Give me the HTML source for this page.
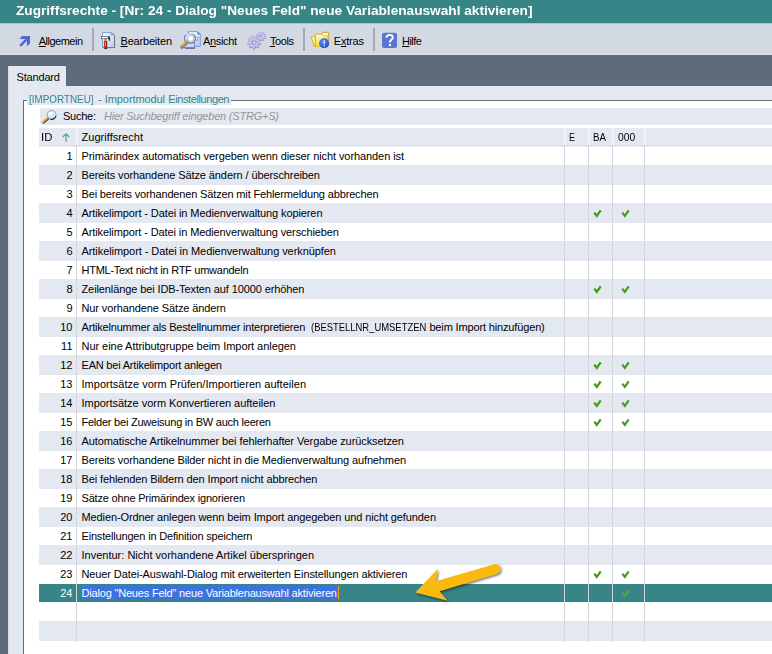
<!DOCTYPE html><html lang="de"><head><meta charset="utf-8"><title>Zugriffsrechte</title><style>

html,body{margin:0;padding:0;}
body{width:772px;height:654px;overflow:hidden;position:relative;background:#5f6b7c;font-family:"Liberation Sans", sans-serif;font-size:11px;color:#000;}
.a{position:absolute;}
.t{position:absolute;white-space:nowrap;line-height:13px;height:13px;}
.t u{text-decoration:underline;}
.row{position:absolute;left:39px;width:733px;height:19px;}
.alt{background:#e4e8f1;height:20px;}
.num{position:absolute;right:699.5px;top:4px;line-height:13px;white-space:nowrap;}
.vs{position:absolute;width:1px;background:#d3d6dd;top:146px;height:496px;}

</style></head><body>
<div class="a" style="left:0;top:0;width:772px;height:23px;background:#378587"></div>
<div class="a" style="left:0;top:23px;width:772px;height:32px;background:#d3d9e3"></div>
<div class="a" style="left:0;top:23px;width:772px;height:1px;background:#b3bcdc"></div>
<div class="a" style="left:0;top:54px;width:772px;height:1px;background:#dde2ea"></div>
<div class="a" style="left:8px;top:66px;width:58px;height:21px;border-radius:1px 1px 0 0;background:#e4e8f0"></div>
<div class="a" style="left:8px;top:86px;width:764px;height:568px;background:#e4e8f0"></div>
<div class="a" style="left:8px;top:67px;width:1px;height:587px;background:#d9dde6"></div>
<div class="a" style="left:23px;top:100px;width:760px;height:570px;border:1px solid #6a6a6a;box-shadow:inset 1px 1px 0 #fff;background:#fff"></div>
<div class="a" style="left:27px;top:93px;width:204px;height:12px;background:#e4e8f0"></div>
<div class="a" style="left:40px;top:108px;width:732px;height:17px;background:#e4e8f0"></div>
<div class="a" style="left:39px;top:128px;width:733px;height:18px;background:#e4e8f1"></div>
<div class="a" style="left:76px;top:128px;width:2px;height:17px;background:#f3f5f9"></div>
<div class="a" style="left:564px;top:128px;width:2px;height:17px;background:#f3f5f9"></div>
<div class="a" style="left:588px;top:128px;width:2px;height:17px;background:#f3f5f9"></div>
<div class="a" style="left:612px;top:128px;width:2px;height:17px;background:#f3f5f9"></div>
<div class="a" style="left:644px;top:128px;width:2px;height:17px;background:#f3f5f9"></div>
<div class="row" style="top:146px;"><span class="num">1</span></div>
<div class="row alt" style="top:165px;"><span class="num">2</span></div>
<div class="row" style="top:184px;"><span class="num">3</span></div>
<div class="row alt" style="top:203px;"><span class="num">4</span></div>
<div class="row" style="top:222px;"><span class="num">5</span></div>
<div class="row alt" style="top:241px;"><span class="num">6</span></div>
<div class="row" style="top:260px;"><span class="num">7</span></div>
<div class="row alt" style="top:279px;"><span class="num">8</span></div>
<div class="row" style="top:298px;"><span class="num">9</span></div>
<div class="row alt" style="top:317px;"><span class="num">10</span></div>
<div class="row" style="top:336px;"><span class="num">11</span></div>
<div class="row alt" style="top:355px;"><span class="num">12</span></div>
<div class="row" style="top:374px;"><span class="num">13</span></div>
<div class="row alt" style="top:393px;"><span class="num">14</span></div>
<div class="row" style="top:412px;"><span class="num">15</span></div>
<div class="row alt" style="top:431px;"><span class="num">16</span></div>
<div class="row" style="top:450px;"><span class="num">17</span></div>
<div class="row alt" style="top:469px;"><span class="num">18</span></div>
<div class="row" style="top:488px;"><span class="num">19</span></div>
<div class="row alt" style="top:507px;"><span class="num">20</span></div>
<div class="row" style="top:526px;"><span class="num">21</span></div>
<div class="row alt" style="top:545px;"><span class="num">22</span></div>
<div class="row" style="top:564px;"><span class="num">23</span></div>
<div class="row alt" style="top:584px;height:18px;background:#378587;color:#fff;"><span class="num" style="top:3px">24</span></div>
<div class="row alt" style="top:621px"></div>
<div class="a" style="left:39px;top:145px;width:733px;height:1px;background:#d4d9e3"></div>
<div class="a" style="left:39px;top:146px;width:733px;height:1px;background:#eceff5"></div>
<div class="vs" style="left:76px"></div>
<div class="vs" style="left:564px"></div>
<div class="vs" style="left:588px"></div>
<div class="vs" style="left:612px"></div>
<div class="vs" style="left:644px"></div>
<div class="a" style="left:82px;top:586px;width:256px;height:13px;background:#3c72dd"></div>
<div class="a" style="left:338px;top:586px;width:1px;height:13px;background:#f0a020"></div>
<span class="t" id="r1" style="left:81.50px;top:150px;letter-spacing:-0.0831px;">Primärindex automatisch vergeben wenn dieser nicht vorhanden ist</span>
<span class="t" id="r2" style="left:81.50px;top:169px;letter-spacing:-0.0931px;">Bereits vorhandene Sätze ändern / überschreiben</span>
<span class="t" id="r3" style="left:81.50px;top:188px;letter-spacing:-0.1535px;">Bei bereits vorhandenen Sätzen mit Fehlermeldung abbrechen</span>
<span class="t" id="r4" style="left:81.50px;top:207px;letter-spacing:-0.0976px;">Artikelimport - Datei in Medienverwaltung kopieren</span>
<span class="t" id="r5" style="left:81.50px;top:226px;letter-spacing:-0.1040px;">Artikelimport - Datei in Medienverwaltung verschieben</span>
<span class="t" id="r6" style="left:81.50px;top:245px;letter-spacing:-0.0689px;">Artikelimport - Datei in Medienverwaltung verknüpfen</span>
<span class="t" id="r7" style="left:81.50px;top:264px;letter-spacing:-0.2661px;">HTML-Text nicht in RTF umwandeln</span>
<span class="t" id="r8" style="left:81.50px;top:283px;letter-spacing:-0.1047px;">Zeilenlänge bei IDB-Texten auf 10000 erhöhen</span>
<span class="t" id="r9" style="left:81.50px;top:302px;letter-spacing:-0.1112px;">Nur vorhandene Sätze ändern</span>
<span class="t" id="s10_0" style="left:81.50px;top:321px;letter-spacing:-0.1869px;">Artikelnummer als Bestellnummer interpretieren</span>
<span class="t" id="s10_1" style="left:310.50px;top:321px;transform-origin:0 0;transform:scaleX(0.8573);">(BESTELLNR_UMSETZEN</span>
<span class="t" id="s10_2" style="left:429.40px;top:321px;letter-spacing:-0.1466px;">beim Import hinzufügen)</span>
<span class="t" id="r11" style="left:81.50px;top:340px;letter-spacing:-0.0469px;">Nur eine Attributgruppe beim Import anlegen</span>
<span class="t" id="r12" style="left:81.50px;top:359px;letter-spacing:-0.2015px;">EAN bei Artikelimport anlegen</span>
<span class="t" id="r13" style="left:81.50px;top:378px;letter-spacing:0.0167px;">Importsätze vorm Prüfen/Importieren aufteilen</span>
<span class="t" id="r14" style="left:81.50px;top:397px;letter-spacing:-0.0275px;">Importsätze vorm Konvertieren aufteilen</span>
<span class="t" id="r15" style="left:81.50px;top:416px;letter-spacing:-0.2327px;">Felder bei Zuweisung in BW auch leeren</span>
<span class="t" id="r16" style="left:81.50px;top:435px;letter-spacing:-0.0928px;">Automatische Artikelnummer bei fehlerhafter Vergabe zurücksetzen</span>
<span class="t" id="r17" style="left:81.50px;top:454px;letter-spacing:-0.1274px;">Bereits vorhandene Bilder nicht in die Medienverwaltung aufnehmen</span>
<span class="t" id="r18" style="left:81.50px;top:473px;letter-spacing:-0.1184px;">Bei fehlenden Bildern den Import nicht abbrechen</span>
<span class="t" id="r19" style="left:81.50px;top:492px;letter-spacing:-0.1836px;">Sätze ohne Primärindex ignorieren</span>
<span class="t" id="r20" style="left:81.50px;top:511px;letter-spacing:-0.1049px;">Medien-Ordner anlegen wenn beim Import angegeben und nicht gefunden</span>
<span class="t" id="r21" style="left:81.50px;top:530px;letter-spacing:-0.1762px;">Einstellungen in Definition speichern</span>
<span class="t" id="r22" style="left:81.50px;top:549px;letter-spacing:0.0031px;">Inventur: Nicht vorhandene Artikel überspringen</span>
<span class="t" id="r23" style="left:81.50px;top:568px;letter-spacing:-0.1094px;">Neuer Datei-Auswahl-Dialog mit erweiterten Einstellungen aktivieren</span>
<span class="t" id="r24" style="left:81.50px;top:587px;letter-spacing:-0.1872px;color:#fff;">Dialog &quot;Neues Feld&quot; neue Variablenauswahl aktivieren</span>
<span class="t" id="t_title" style="left:15.50px;transform-origin:0 0;transform:scaleX(1.1372);font-weight:bold;font-size:12px;color:#fff;top:5px;">Zugriffsrechte - [Nr: 24 - Dialog "Neues Feld" neue Variablenauswahl aktivieren]</span>
<span class="t" id="t_allg" style="left:38.75px;letter-spacing:-0.5078px;top:35px;"><u>A</u>llgemein</span>
<span class="t" id="t_bearb" style="left:120.50px;letter-spacing:-0.1910px;top:35px;"><u>B</u>earbeiten</span>
<span class="t" id="t_ans" style="left:203.00px;letter-spacing:-0.3490px;top:35px;">A<u>n</u>sicht</span>
<span class="t" id="t_tools" style="left:270.00px;letter-spacing:-0.4219px;top:35px;"><u>T</u>ools</span>
<span class="t" id="t_extras" style="left:333.75px;letter-spacing:-0.1875px;top:35px;">E<u>x</u>tras</span>
<span class="t" id="t_hilfe" style="left:402.00px;letter-spacing:-0.5664px;top:35px;"><u>H</u>ilfe</span>
<span class="t" id="t_std" style="left:16.50px;letter-spacing:-0.1652px;top:71px;">Standard</span>
<span class="t" id="t_grp1" style="left:28.50px;transform-origin:0 0;transform:scaleX(0.8968);top:93px;color:#33858f;">[IMPORTNEU]</span>
<span class="t" id="t_grp2" style="left:98.30px;letter-spacing:-0.0966px;top:93px;color:#33858f;">- Importmodul</span>
<span class="t" id="t_grp3" style="left:168.30px;letter-spacing:-0.4052px;top:93px;color:#33858f;">Einstellungen</span>
<span class="t" id="t_suche" style="left:63.00px;letter-spacing:-0.2500px;top:110px;">Suche:</span>
<span class="t" id="t_hint" style="left:104.00px;letter-spacing:-0.2093px;top:110px;font-style:italic;color:#93959d;">Hier Suchbegriff eingeben (STRG+S)</span>
<span class="t" id="t_hid" style="left:40.70px;transform-origin:0 0;transform:scaleX(1.0273);top:131px;">ID</span>
<span class="t" id="t_hzr" style="left:81.50px;letter-spacing:0.0469px;top:131px;">Zugriffsrecht</span>
<span class="t" id="t_hE" style="left:569.40px;transform-origin:0 0;transform:scaleX(0.8170);top:131px;">E</span>
<span class="t" id="t_hBA" style="left:593.30px;transform-origin:0 0;transform:scaleX(0.8851);top:131px;">BA</span>
<span class="t" id="t_h000" style="left:617.80px;transform-origin:0 0;transform:scaleX(0.9369);top:131px;">000</span>
<div class="a" style="left:92px;top:28px;width:2px;height:23px;background:#a1a8b7"></div>
<div class="a" style="left:303px;top:28px;width:2px;height:23px;background:#a1a8b7"></div>
<div class="a" style="left:373px;top:28px;width:2px;height:23px;background:#a1a8b7"></div>
<svg class="a" style="left:0;top:0" width="772" height="654" viewBox="0 0 772 654">
<defs>
<linearGradient id="pg" x1="0" y1="0" x2="1" y2="1"><stop offset="0" stop-color="#ffffff"/><stop offset="1" stop-color="#b9c8f4"/></linearGradient>
<linearGradient id="fo" x1="0" y1="0" x2="1" y2="1"><stop offset="0" stop-color="#fffab8"/><stop offset="1" stop-color="#efce28"/></linearGradient>
<radialGradient id="bl" cx="0.4" cy="0.35" r="0.7"><stop offset="0" stop-color="#5a96f4"/><stop offset="1" stop-color="#1a46c4"/></radialGradient>
<linearGradient id="hd" x1="0" y1="0" x2="1" y2="1"><stop offset="0" stop-color="#fbe060"/><stop offset="0.5" stop-color="#f0a020"/><stop offset="1" stop-color="#9a8a70"/></linearGradient>
<filter id="sh" x="-20%" y="-20%" width="140%" height="150%"><feDropShadow dx="1.2" dy="1.5" stdDeviation="1" flood-color="#000" flood-opacity="0.55"/></filter>
</defs>
<path d="M22.1,36 H30 V43.5 L27.3,46.1 H27 V40.8 L21.6,46.2 H20.2 L19.8,45.8 V44.4 L25.3,38.9 H19.9 V38.5 Z" fill="#4f67d2"/>
<path d="M102.5,32.6 H111.5 L114.5,35.6 V47.5 H102.5 Z" fill="url(#pg)" stroke="#7b9aea" stroke-width="1"/>
<path d="M103,47.6 H114.6 V35.6 L111.6,32.6" fill="none" stroke="#74747c" stroke-width="1"/>
<path d="M110.6,32.8 L113.2,35.4 H110.6 Z" fill="#5a9af0"/>
<rect x="101.3" y="36.4" width="7.8" height="2.3" fill="#fafafa" stroke="#505050" stroke-width="0.65"/>
<path d="M108.4,36.2 Q110.6,36.8 110.1,40.7 L108.9,40.5 Q109.2,38.9 107.9,38.6 Z" fill="#202020"/>
<rect x="104.3" y="38.9" width="2.4" height="2.3" fill="#8c8c8c"/>
<rect x="103.9" y="41.1" width="3.2" height="7.6" fill="#dc2c08"/>
<rect x="106.4" y="41.1" width="0.7" height="7.6" fill="#601408"/>
<rect x="105" y="42.3" width="0.8" height="3.8" fill="#f8b020"/>
<rect x="104.6" y="48.1" width="2.5" height="0.8" fill="#201008"/>
<linearGradient id="pg2" x1="0" y1="0" x2="0.6" y2="1"><stop offset="0" stop-color="#ffffff"/><stop offset="1" stop-color="#bcd0f8"/></linearGradient>
<path d="M188.6,31.6 H197.8 L200.3,34.1 V46.3 H188.6 Z" fill="url(#pg2)" stroke="#7a9ad8" stroke-width="1"/>
<path d="M197.3,32 H198.2 L200,33.8 V34.6 H197.3 Z" fill="#3f9cb6"/>
<path d="M196.3,37.6 H198.6 M196.3,40.1 H198.6" stroke="#6f90d8" stroke-width="1"/>
<path d="M184.5,35.5 H194.6 V47.8 H184.5 Z" fill="#c6d6f8" stroke="#6c8cd2" stroke-width="1"/>
<path d="M185.2,48.2 H195" stroke="#5c5294" stroke-width="1.1"/>
<circle cx="190.7" cy="38.5" r="4.6" fill="#ffffff" stroke="#74745c" stroke-width="1.2"/>
<path d="M186.4,40.2 A4.6,4.6 0 0 1 192.5,34.3" fill="none" stroke="#e4ecfc" stroke-width="1.2"/>
<circle cx="190.7" cy="38.5" r="3" fill="none" stroke="#aac2f6" stroke-width="1.1"/>
<path d="M186.3,42.9 L182.1,46.9" stroke="#6c6c58" stroke-width="3.6" stroke-linecap="round"/>
<path d="M186.5,42.7 L182.3,46.7" stroke="#8a88cc" stroke-width="2.6" stroke-linecap="round"/>
<path d="M185.9,42.0 L181.6,46.0" stroke="#f08a14" stroke-width="2.0" stroke-linecap="round"/>
<path d="M185.5,41.6 L181.3,45.5" stroke="#f8dc28" stroke-width="1.0" stroke-linecap="round"/>
<path d="M260.87,43.57 L260.65,44.72 L258.88,45.16 L258.42,45.94 L258.88,47.70 L257.97,48.44 L256.34,47.64 L255.48,47.94 L254.70,49.58 L253.53,49.57 L252.79,47.91 L251.94,47.58 L250.29,48.34 L249.40,47.58 L249.90,45.83 L249.46,45.04 L247.71,44.55 L247.52,43.40 L249.03,42.38 L249.19,41.49 L248.16,39.99 L248.76,38.99 L250.57,39.18 L251.27,38.60 L251.45,36.79 L252.55,36.41 L253.81,37.71 L254.72,37.73 L256.02,36.45 L257.11,36.86 L257.24,38.68 L257.92,39.27 L259.74,39.13 L260.31,40.15 L259.24,41.62 L259.39,42.51 Z" fill="#8a82c2"/>
<path d="M260.37,42.86 L260.15,43.99 L258.30,44.37 L257.86,45.12 L258.41,46.93 L257.52,47.65 L255.86,46.76 L255.03,47.05 L254.29,48.78 L253.14,48.77 L252.44,47.01 L251.63,46.70 L249.95,47.56 L249.07,46.81 L249.67,45.02 L249.24,44.26 L247.40,43.83 L247.22,42.69 L248.82,41.70 L248.99,40.84 L247.85,39.33 L248.44,38.35 L250.31,38.62 L250.98,38.07 L251.09,36.18 L252.17,35.80 L253.43,37.21 L254.30,37.22 L255.59,35.85 L256.67,36.25 L256.72,38.14 L257.38,38.71 L259.25,38.48 L259.82,39.49 L258.65,40.97 L258.79,41.83 Z" fill="#c3bfe9" stroke="#a9a3da" stroke-width="0.5"/>
<ellipse cx="254.1" cy="42.5" rx="2.5" ry="2.1" fill="#8f87c7"/>
<ellipse cx="254.2" cy="42.6" rx="1.5" ry="1.1" fill="#e8e8f8"/>
<path d="M265.79,38.19 L265.43,39.04 L264.07,39.10 L263.57,39.60 L263.49,40.96 L262.64,41.31 L261.63,40.38 L260.93,40.38 L259.91,41.29 L259.06,40.93 L259.00,39.57 L258.50,39.07 L257.14,38.99 L256.79,38.14 L257.72,37.13 L257.72,36.43 L256.81,35.41 L257.17,34.56 L258.53,34.50 L259.03,34.00 L259.11,32.64 L259.96,32.29 L260.97,33.22 L261.67,33.22 L262.69,32.31 L263.54,32.67 L263.60,34.03 L264.10,34.53 L265.46,34.61 L265.81,35.46 L264.88,36.47 L264.88,37.17 Z" fill="#8a82c2"/>
<path d="M265.39,37.56 L265.04,38.39 L263.69,38.44 L263.21,38.92 L263.15,40.27 L262.31,40.61 L261.32,39.68 L260.64,39.68 L259.64,40.59 L258.81,40.24 L258.76,38.89 L258.28,38.41 L256.93,38.35 L256.59,37.51 L257.52,36.52 L257.52,35.84 L256.61,34.84 L256.96,34.01 L258.31,33.96 L258.79,33.48 L258.85,32.13 L259.69,31.79 L260.68,32.72 L261.36,32.72 L262.36,31.81 L263.19,32.16 L263.24,33.51 L263.72,33.99 L265.07,34.05 L265.41,34.89 L264.48,35.88 L264.48,36.56 Z" fill="#c5c1ea" stroke="#a9a3da" stroke-width="0.5"/>
<ellipse cx="260.3" cy="35.7" rx="1.5" ry="1.2" fill="#958dcb"/>
<ellipse cx="260.4" cy="35.8" rx="0.7" ry="0.5" fill="#dcdcf4"/>
<linearGradient id="fo2" x1="0" y1="0" x2="0.3" y2="1"><stop offset="0" stop-color="#fffde4"/><stop offset="1" stop-color="#f2d838"/></linearGradient>
<path d="M323,32.3 H328.7 V45.6 H316 V34.3 H321.6 Z" fill="#fffbe2" stroke="#c8980c" stroke-width="0.9"/>
<path d="M315.4,34.3 H322.2 L323.4,35.6 H327.3 V46.5 H315.4 Z" fill="url(#fo2)" stroke="#dcae20" stroke-width="0.8"/>
<path d="M311.2,36.7 L315,36.1 V46.4 H314.2 Z" fill="#f8e878" stroke="#d4a418" stroke-width="0.8"/>
<path d="M312.4,37.6 L314.3,37.3 V44.5 Z" fill="#fffbe0"/>
<circle cx="324.1" cy="43.2" r="4.95" fill="url(#bl)"/>
<path d="M323.6,40.5 H325 L324.7,44.3 H323.9 Z" fill="#fff"/><circle cx="324.3" cy="45.7" r="0.7" fill="#f4f8ff"/>
<rect x="382" y="32.8" width="15" height="15.2" rx="2" fill="#5b75d2"/>
<path d="M386.4,37.6 Q386.6,34.9 389.6,34.9 Q392.7,34.9 392.7,37.4 Q392.7,38.9 391,40.1 Q389.9,40.9 389.9,42.6" fill="none" stroke="#fff" stroke-width="1.9" stroke-linecap="butt"/>
<rect x="388.9" y="44.1" width="2" height="2" fill="#fff"/>
<path d="M48.2,118.6 L43.6,122.6" stroke="#4c4a56" stroke-width="2.2" stroke-linecap="round"/>
<path d="M47.6,117.9 L43.0,121.9" stroke="#f2a41c" stroke-width="1.9" stroke-linecap="round"/>
<circle cx="51.65" cy="114.85" r="4.4" fill="#d2ecff" stroke="#8e8ed2" stroke-width="0.9"/>
<path d="M55.9,116.2 A4.5,4.5 0 0 1 50.2,119.2" fill="none" stroke="#34343a" stroke-width="1.2"/>
<ellipse cx="50.6" cy="113.6" rx="2.2" ry="1.8" fill="#ffffff" opacity="0.85"/>
<path d="M66,133.6 V142 M62.8,137 L66,133.7 L69.2,137" fill="none" stroke="#4a9c9c" stroke-width="1.1"/>
<path d="M594.3,212.6 L596.8,215.9 L600.7,210.3" fill="none" stroke="#3f9a0c" stroke-width="2.2" stroke-linejoin="miter"/>
<path d="M622.3,212.6 L624.8,215.9 L628.7,210.3" fill="none" stroke="#4a9a28" stroke-width="2.2" stroke-linejoin="miter"/>
<path d="M594.3,288.6 L596.8,291.9 L600.7,286.3" fill="none" stroke="#3f9a0c" stroke-width="2.2" stroke-linejoin="miter"/>
<path d="M622.3,288.6 L624.8,291.9 L628.7,286.3" fill="none" stroke="#4a9a28" stroke-width="2.2" stroke-linejoin="miter"/>
<path d="M594.3,364.6 L596.8,367.9 L600.7,362.3" fill="none" stroke="#3f9a0c" stroke-width="2.2" stroke-linejoin="miter"/>
<path d="M622.3,364.6 L624.8,367.9 L628.7,362.3" fill="none" stroke="#4a9a28" stroke-width="2.2" stroke-linejoin="miter"/>
<path d="M594.3,383.6 L596.8,386.9 L600.7,381.3" fill="none" stroke="#3f9a0c" stroke-width="2.2" stroke-linejoin="miter"/>
<path d="M622.3,383.6 L624.8,386.9 L628.7,381.3" fill="none" stroke="#4a9a28" stroke-width="2.2" stroke-linejoin="miter"/>
<path d="M594.3,402.6 L596.8,405.9 L600.7,400.3" fill="none" stroke="#3f9a0c" stroke-width="2.2" stroke-linejoin="miter"/>
<path d="M622.3,402.6 L624.8,405.9 L628.7,400.3" fill="none" stroke="#4a9a28" stroke-width="2.2" stroke-linejoin="miter"/>
<path d="M594.3,421.6 L596.8,424.9 L600.7,419.3" fill="none" stroke="#3f9a0c" stroke-width="2.2" stroke-linejoin="miter"/>
<path d="M622.3,421.6 L624.8,424.9 L628.7,419.3" fill="none" stroke="#4a9a28" stroke-width="2.2" stroke-linejoin="miter"/>
<path d="M594.3,573.6 L596.8,576.9 L600.7,571.3" fill="none" stroke="#3f9a0c" stroke-width="2.2" stroke-linejoin="miter"/>
<path d="M622.3,573.6 L624.8,576.9 L628.7,571.3" fill="none" stroke="#4a9a28" stroke-width="2.2" stroke-linejoin="miter"/>
<path d="M622.3,592.6 L624.8,595.9 L628.7,590.3" fill="none" stroke="#58a548" stroke-width="2.2" stroke-linejoin="miter"/>
<path d="M415.4,592.4 L437.9,568.8 L435.8,581.2 L494.3,564.3 A4.7,4.7 0 0 1 497.3,573.4 L439.5,591.2 L447.3,600.5 Z" fill="#fbb80c" filter="url(#sh)"/>
</svg>
</body></html>
